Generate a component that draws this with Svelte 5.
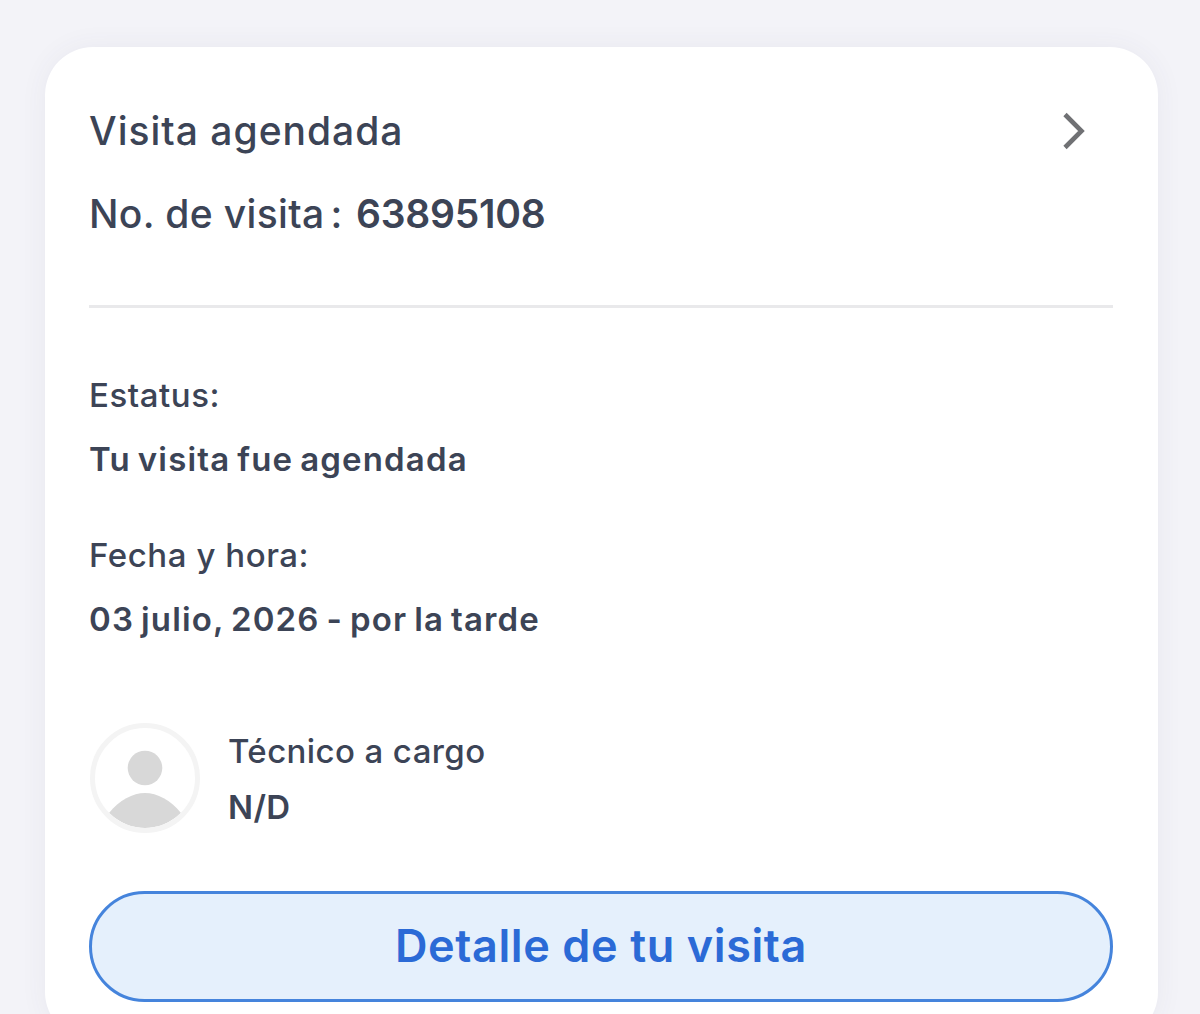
<script>
  const details = [
    { label: 'Estatus:', value: 'Tu visita fue agendada' },
    { label: 'Fecha y hora:', value: '03 julio, 2026 - por la tarde' }
  ];
</script>

<main class="page">
  <section class="card">
    <header class="head">
      <div class="title-row">
        <h2>Visita agendada</h2>
        <svg class="chev" width="26" height="40" viewBox="0 0 26 40" aria-hidden="true">
          <path d="M4 3.5 L20.5 20 L4 36.5" fill="none" stroke="#707174" stroke-width="4.6" />
        </svg>
      </div>
      <p class="visit-no"><span class="visit-label">No. de visita<span class="colon">:</span></span><span class="visit-num">63895108</span></p>
    </header>

    <div class="details">
      {#each details as d}
        <div class="detail">
          <p class="label">{d.label}</p>
          <p class="value">{d.value}</p>
        </div>
      {/each}
    </div>

    <div class="tech">
      <div class="avatar">
        <svg viewBox="0 0 100 100" aria-hidden="true">
          <circle cx="50" cy="40" r="17.3" fill="#d8d8d8" />
          <path d="M14 85 C24 72 38 65 50 65 C62 65 76 72 86 85 C76 95 62 100 50 100 C38 100 24 95 14 85 Z" fill="#d8d8d8" />
        </svg>
      </div>
      <div class="tech-text">
        <p class="tech-label">Técnico a cargo</p>
        <p class="tech-name">N/D</p>
      </div>
    </div>

    <button class="cta">Detalle de tu visita</button>
  </section>
</main>

<style>
  :global(body) {
    margin: 0;
    background: #f3f3f8;
    overflow: hidden;
  }
  .page {
    height: 1014px;
    overflow: hidden;
    padding: 47px 42px 0 45px;
    box-sizing: border-box;
    font-family: "Inter", "Noto Sans", sans-serif;
    color: #3c4456;
  }
  .card {
    background: #fff;
    border-radius: 48px;
    padding: 58px 45px 40px 44px;
    height: 993px;
    box-sizing: border-box;
    box-shadow: 0 0 28px rgba(60, 60, 100, 0.06);
  }
  p, h2 { margin: 0; }
  .head {
    border-bottom: 3px solid #e9e9eb;
    height: 203px;
    box-sizing: border-box;
  }
  .title-row {
    display: flex;
    justify-content: space-between;
    align-items: center;
    height: 52px;
    padding-right: 26px;
  }
  h2 {
    font-size: 39px;
    font-weight: 550;
    line-height: 52px;
    letter-spacing: 1px;
  }
  .visit-no {
    display: flex;
    margin-top: 31px;
    font-size: 39px;
    font-weight: 550;
    line-height: 52px;
  }
  .visit-label {
    letter-spacing: 0.35px;
    width: 267px;
  }
  .colon { margin-left: 6px; }
  .visit-num {
    font-weight: 600;
    letter-spacing: -0.25px;
  }
  .details {
    display: flex;
    flex-direction: column;
    gap: 56px;
    margin-top: 67px;
  }
  .label {
    font-size: 33px;
    font-weight: 500;
    line-height: 40px;
    letter-spacing: 0.55px;
  }
  .value {
    font-size: 33px;
    font-weight: 600;
    line-height: 40px;
    margin-top: 24px;
    letter-spacing: 1.15px;
    word-spacing: -2.5px;
  }
  .tech {
    display: flex;
    align-items: center;
    gap: 28px;
    margin-top: 84px;
    padding-left: 1px;
  }
  .avatar {
    width: 110px;
    height: 110px;
    box-sizing: border-box;
    border: 5px solid #f4f4f4;
    border-radius: 50%;
    overflow: hidden;
    flex: none;
  }
  .avatar svg {
    display: block;
    width: 100%;
    height: 100%;
  }
  .tech-text { padding-top: 2px; }
  .tech-label {
    font-size: 33px;
    font-weight: 500;
    line-height: 40px;
    letter-spacing: 0.4px;
  }
  .tech-name {
    font-size: 33px;
    font-weight: 600;
    line-height: 40px;
    margin-top: 16px;
    letter-spacing: 0.4px;
  }
  .cta {
    display: block;
    width: 100%;
    height: 111px;
    margin-top: 58px;
    padding: 0 0 2px;
    border: 3px solid #4584dc;
    border-radius: 56px;
    background: #e5f0fc;
    color: #2b6ad6;
    font-family: inherit;
    font-size: 45px;
    font-weight: 600;
    letter-spacing: 0.6px;
  }
</style>
